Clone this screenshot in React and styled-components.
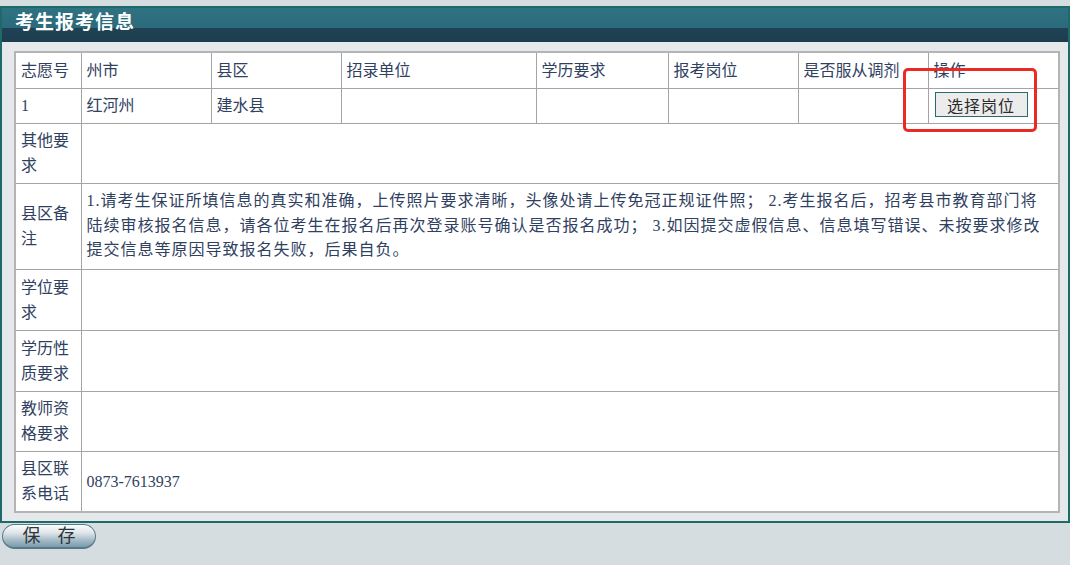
import React from "react";
import styled, { createGlobalStyle } from "styled-components";

const GlobalStyle = createGlobalStyle`
  body {
    margin: 0;
    background: #ffffff;
    font-family: "Liberation Serif", "Noto Sans CJK SC", serif;
  }
`;

const Page = styled.div`
  width: 1070px;
  min-height: 565px;
  background: #d6dde0;
  padding-top: 6px;
  box-sizing: border-box;
`;

const Panel = styled.div`
  border: 2px solid #1d6a68;
  background: #e5e9eb;
`;

const PanelTitle = styled.div`
  height: 34px;
  padding-left: 13px;
  background: linear-gradient(#2f7383 0%, #2b6a7a 58%, #1f4254 58%, #1d3d4f 100%);
  color: #ffffff;
  font-size: 19px;
  font-weight: bold;
  letter-spacing: 1px;
  line-height: 30px;
`;

const PanelBody = styled.div`
  padding: 9px 8px 8px 12px;
`;

const TableWrap = styled.div`
  position: relative;
`;

const Table = styled.table`
  width: 1044px;
  table-layout: fixed;
  border-collapse: collapse;
  background: #ffffff;
  border: 2px solid #b4b4b4;
  color: #30415f;
  font-size: 16px;

  td {
    border: 1px solid #a4a4a4;
    padding: 0 5px;
    vertical-align: middle;
    line-height: 25px;
    word-break: break-all;
  }
`;

const Row = styled.tr`
  height: ${(p) => p.$h}px;
`;

const Notes = styled.td`
  && {
    letter-spacing: 1px;
    line-height: 24.5px;
  }
`;

const PickButton = styled.button`
  width: 93px;
  height: 25px;
  margin-left: 1px;
  padding: 0;
  border: 1px solid #2c6b6b;
  background: #ececec;
  color: #2b2b2b;
  font-family: inherit;
  font-size: 16px;
  letter-spacing: 1px;
  cursor: pointer;
`;

const Highlight = styled.div`
  position: absolute;
  left: 889px;
  top: 17px;
  width: 134px;
  height: 64px;
  box-sizing: border-box;
  border: 3px solid #ec2a24;
  border-radius: 5px;
  pointer-events: none;
`;

const SaveButton = styled.button`
  margin: 1px 0 0 2px;
  width: 94px;
  height: 25px;
  padding: 0;
  border: 1px solid #58798a;
  border-bottom-width: 2px;
  border-radius: 13px;
  background: linear-gradient(#fbfcfc 0%, #dfe6ea 35%, #a3bac6 70%, #7a9bac 100%);
  color: #2f3438;
  font-family: inherit;
  font-size: 18px;
  letter-spacing: 17px;
  text-indent: 17px;
  line-height: 21px;
  cursor: pointer;
`;

const cols = [66, 130, 130, 195, 132, 130, 130, 131];
const heads = ["志愿号", "州市", "县区", "招录单位", "学历要求", "报考岗位", "是否服从调剂", "操作"];

const details = [
  { label: "其他要求", h: 60 },
  { label: "学位要求", h: 61 },
  { label: "学历性质要求", h: 61 },
  { label: "教师资格要求", h: 60 },
];

export default function App() {
  return (
    <Page>
      <GlobalStyle />
      <Panel>
        <PanelTitle>考生报考信息</PanelTitle>
        <PanelBody>
          <TableWrap>
            <Table>
              <colgroup>
                {cols.map((w, i) => (
                  <col key={i} style={{ width: w }} />
                ))}
              </colgroup>
              <tbody>
                <Row $h={36}>
                  {heads.map((t) => (
                    <td key={t}>{t}</td>
                  ))}
                </Row>
                <Row $h={35}>
                  <td>1</td>
                  <td>红河州</td>
                  <td>建水县</td>
                  <td></td>
                  <td></td>
                  <td></td>
                  <td></td>
                  <td>
                    <PickButton>选择岗位</PickButton>
                  </td>
                </Row>
                <Row $h={details[0].h}>
                  <td>{details[0].label}</td>
                  <td colSpan={7}></td>
                </Row>
                <Row $h={86}>
                  <td>县区备注</td>
                  <Notes colSpan={7}>
                    1.请考生保证所填信息的真实和准确，上传照片要求清晰，头像处请上传免冠正规证件照； 2.考生报名后，招考县市教育部门将
                    <br />
                    陆续审核报名信息，请各位考生在报名后再次登录账号确认是否报名成功； 3.如因提交虚假信息、信息填写错误、未按要求修改
                    <br />
                    提交信息等原因导致报名失败，后果自负。
                  </Notes>
                </Row>
                {details.slice(1).map((d) => (
                  <Row key={d.label} $h={d.h}>
                    <td>{d.label}</td>
                    <td colSpan={7}></td>
                  </Row>
                ))}
                <Row $h={61}>
                  <td>县区联系电话</td>
                  <td colSpan={7}>0873-7613937</td>
                </Row>
              </tbody>
            </Table>
            <Highlight />
          </TableWrap>
        </PanelBody>
      </Panel>
      <SaveButton>保存</SaveButton>
    </Page>
  );
}
